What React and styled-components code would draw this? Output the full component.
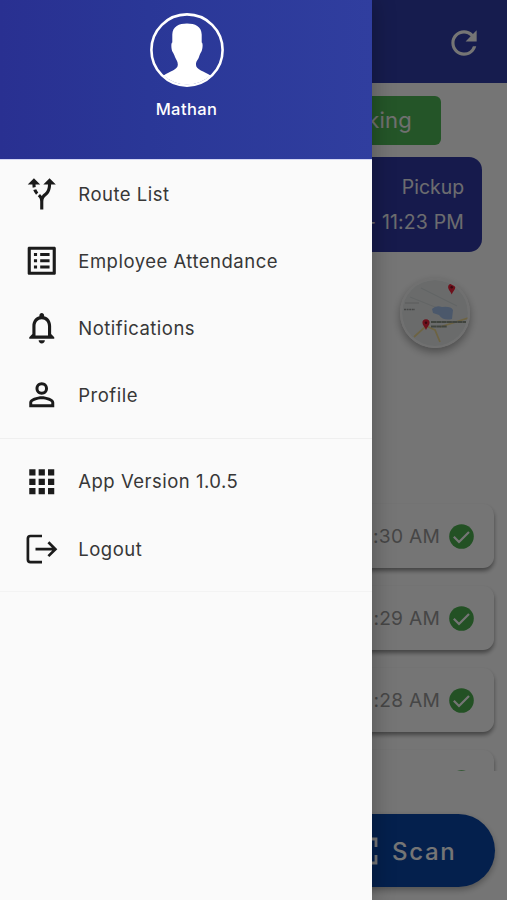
import React from "react";
import styled, { createGlobalStyle } from "styled-components";
import {
  MdAltRoute,
  MdListAlt,
  MdNotificationsNone,
  MdPersonOutline,
  MdApps,
  MdRefresh,
} from "react-icons/md";

const GlobalStyle = createGlobalStyle`
  * { box-sizing: border-box; }
  body { margin: 0; font-family: Inter, "Liberation Sans", sans-serif; }
`;

const Phone = styled.div`
  position: relative;
  width: 507px;
  height: 900px;
  overflow: hidden;
  background: #fff;
`;

const Screen = styled.main`
  height: 100%;
  display: flex;
  flex-direction: column;
  align-items: flex-end;
`;

const AppBar = styled.header`
  width: 100%;
  height: 83px;
  flex: none;
  display: flex;
  align-items: center;
  justify-content: flex-end;
  padding: 2px 24px 0 0;
  background: #303daa;
  color: #fff;
`;

const TrackingButton = styled.button`
  width: 375px;
  height: 49px;
  flex: none;
  margin: 13px 66px 0 0;
  padding: 0 29px 1px 0;
  border: 0;
  border-radius: 6px;
  background: #50b958;
  color: #f4f4f4;
  font: 400 22px Inter, sans-serif;
  letter-spacing: 0.2px;
  text-align: right;
`;

const TripCard = styled.section`
  width: 457px;
  height: 95px;
  flex: none;
  margin: 12px 25px 0 0;
  padding: 13px 18px 0 0;
  border-radius: 13px;
  background: #303aa6;
  color: #ececf2;
  font-size: 19.4px;
  line-height: 35px;
  letter-spacing: 0;
  text-align: right;
`;

const TripTime = styled.div`
  letter-spacing: 0.2px;
`;

const MapButton = styled.div`
  width: 70px;
  height: 70px;
  flex: none;
  margin: 26px 37px 0 0;
  border: 2px solid #f4f4f4;
  border-radius: 50%;
  overflow: hidden;
  box-shadow: 0 4px 9px rgba(0, 0, 0, 0.35);
  svg { display: block; }
`;

const TimeList = styled.div`
  width: 100%;
  height: 279px;
  flex: none;
  margin-top: 144px;
  padding: 12px 13px 0 0;
  display: flex;
  flex-direction: column;
  align-items: flex-end;
  gap: 18px;
  overflow: hidden;
`;

const TimeCard = styled.div`
  width: 482px;
  height: 64px;
  flex: none;
  display: flex;
  align-items: center;
  justify-content: flex-end;
  gap: 9px;
  padding: 0 20px 0 0;
  border-radius: 11px;
  background: #fff;
  box-shadow: 0 3px 4px rgba(0, 0, 0, 0.42);
  color: #999;
  font-size: 19.2px;
  letter-spacing: 0.25px;
`;

const ScanButton = styled.button`
  width: 190px;
  height: 73px;
  flex: none;
  margin: 43px 12.5px 0 0;
  padding: 1px 38px 0 0;
  display: flex;
  align-items: center;
  justify-content: flex-end;
  gap: 14px;
  border: 0;
  border-radius: 37px;
  background: #0946a9;
  color: #fff;
  font: 500 24px Inter, sans-serif;
  letter-spacing: 1.7px;
  box-shadow: 0 3px 6px rgba(0, 0, 0, 0.3);
`;

const Scrim = styled.div`
  position: absolute;
  inset: 0;
  background: rgba(0, 0, 0, 0.54);
`;

const Drawer = styled.aside`
  position: absolute;
  inset: 0 auto 0 0;
  width: 372px;
  background: #fafafa;
  box-shadow: 0 0 22px rgba(0, 0, 0, 0.3);
`;

const ProfileHeader = styled.div`
  height: 160px;
  padding: 13px 0 0 1px;
  display: flex;
  flex-direction: column;
  align-items: center;
  gap: 11px;
  border-bottom: 1px solid #d3d6f3;
  background: linear-gradient(90deg, #293091, #2a3797 40%, #303e9f);
  color: #fff;
  font-size: 16.5px;
  font-weight: 500;
  line-height: 22px;
  letter-spacing: 0.4px;
  svg { display: block; }
`;

const MenuGroup = styled.nav`
  display: flex;
  flex-direction: column;
`;

const MenuItem = styled.a`
  height: 67.2px;
  display: grid;
  grid-template-columns: 38px 1fr;
  column-gap: 17.7px;
  align-items: center;
  padding: 0 0 0 22.6px;
  color: #373737;
  font-size: 18.5px;
  letter-spacing: 0.5px;
  svg { display: block; color: #1b1b1b; }
`;

const Divider = styled.hr`
  height: 1px;
  margin: 9px 0;
  border: 0;
  background: ${(p) => (p.$faint ? "#f3f3f3" : "#efefef")};
`;

function Avatar() {
  return (
    <svg width="74" height="74" viewBox="0 0 74 74">
      <circle cx="37" cy="37" r="35.6" fill="none" stroke="#fff" strokeWidth="2.6" />
      <path
        fill="#fff"
        d="M37 10.6C29 10.6 22.6 13.5 22.3 21.5V29.5C20.8 30 21.2 36.5 22.6 39C23.5 40.5 24.3 41.5 25 44C26 47 28 48 27.8 52C27.5 57 20 58 13.5 62.5A35 35 0 0 0 60.5 62.5C54 58 46.3 57 46 52C45.8 48 48 47 49 44C49.7 41.5 50.3 40.5 51.2 39C52.7 36.5 53.2 30 51.7 29.5V21.5C51.5 13.5 45 10.6 37 10.6Z"
      />
    </svg>
  );
}

function LogoutIcon() {
  return (
    <svg width="38" height="38" viewBox="0 0 38 38" fill="none" stroke="currentColor" strokeWidth="2.7">
      <path d="M19 6H7.5Q4.9 6 4.9 8.6V29.6Q4.9 32.2 7.5 32.2H19" />
      <path d="M12.5 19.2H32.5M25.4 12.3L32.4 19.2L25.4 26.1" />
    </svg>
  );
}

function CheckIcon() {
  return (
    <svg width="25" height="25" viewBox="0 0 25 25">
      <circle cx="12.5" cy="12.5" r="12.3" fill="#4cb050" />
      <path d="M4.8 12.8L10 18L20 8" fill="none" stroke="#fff" strokeWidth="2.2" />
    </svg>
  );
}

function ScanIcon() {
  return (
    <svg width="28" height="28" viewBox="0 0 28 28" fill="none" stroke="#fff" strokeWidth="2.8">
      <path d="M10 2H2V10M18 2H26V10M10 26H2V18M18 26H26V18" />
    </svg>
  );
}

function Pin({ x, y }) {
  return (
    <g transform={`translate(${x} ${y})`}>
      <path d="M0 6C-1 3-3.6 1.5-3.6-1.2A3.6 3.6 0 0 1 3.6-1.2C3.6 1.5 1 3 0 6Z" fill="#ef243c" />
      <circle cy="-1.2" r="1.2" fill="#7c1020" />
    </g>
  );
}

function MapPreview() {
  return (
    <svg width="66" height="66" viewBox="0 0 66 66">
      <rect width="66" height="66" fill="#e6eaea" />
      <path d="M8 17L38 29M19 8L55 26M60 12L66 20" stroke="#d6dbdc" strokeWidth="1.2" />
      <path d="M30 29Q34 25 40 27Q49 26 51 30L50 39Q41 41 37 35L31 33Z" fill="#a4bfe9" />
      <path d="M12 57L24 46L33 50L38 62M38 47L66 38" fill="none" stroke="#eed893" strokeWidth="1.8" />
      <path d="M3 23H17" stroke="#c4c4c4" strokeWidth="1" />
      <path d="M2 29.5H13" stroke="#999" strokeWidth="1.4" strokeDasharray="2 .6" />
      <path d="M29 42H64M29 46.5H45" stroke="#8d9488" strokeWidth="1.8" strokeDasharray="5 .3" />
      <Pin x="24" y="44" />
      <Pin x="49.7" y="8.5" />
    </svg>
  );
}

const mainItems = [
  { label: "Route List", Icon: MdAltRoute },
  { label: "Employee Attendance", Icon: MdListAlt },
  { label: "Notifications", Icon: MdNotificationsNone },
  { label: "Profile", Icon: MdPersonOutline },
];

const times = ["11:30 AM", "11:29 AM", "11:28 AM", ""];

export default function App() {
  return (
    <Phone>
      <GlobalStyle />
      <Screen>
        <AppBar>
          <MdRefresh size={38} />
        </AppBar>
        <TrackingButton>Tracking</TrackingButton>
        <TripCard>
          <div>Pickup</div>
          <TripTime>- 11:23 PM</TripTime>
        </TripCard>
        <MapButton>
          <MapPreview />
        </MapButton>
        <TimeList>
          {times.map((time, i) => (
            <TimeCard key={i}>
              {time}
              <CheckIcon />
            </TimeCard>
          ))}
        </TimeList>
        <ScanButton>
          <ScanIcon />
          Scan
        </ScanButton>
      </Screen>
      <Scrim />
      <Drawer>
        <ProfileHeader>
          <Avatar />
          Mathan
        </ProfileHeader>
        <MenuGroup>
          {mainItems.map(({ label, Icon }) => (
            <MenuItem key={label}>
              <Icon size={37.5} />
              {label}
            </MenuItem>
          ))}
        </MenuGroup>
        <Divider />
        <MenuGroup>
          <MenuItem>
            <MdApps size={37.5} />
            App Version 1.0.5
          </MenuItem>
          <MenuItem>
            <LogoutIcon />
            Logout
          </MenuItem>
        </MenuGroup>
        <Divider $faint />
      </Drawer>
    </Phone>
  );
}
